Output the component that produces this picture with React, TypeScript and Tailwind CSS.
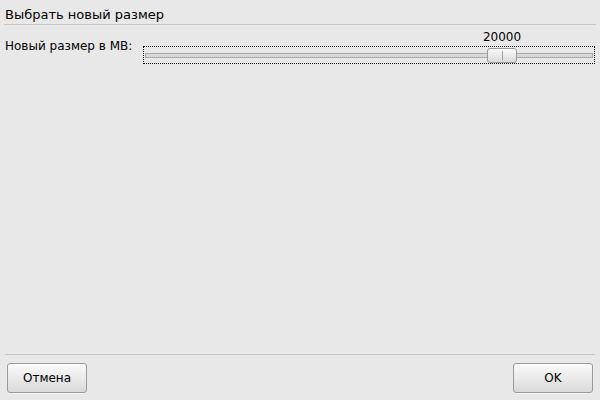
import { useState } from 'react'

const MIN = 0
const MAX = 24447
const TRACK = 450
const HANDLE = 30

const SizeSlider = ({ value }: { value: number }) => {
  const left = 1 + Math.round(((value - MIN) / (MAX - MIN)) * (TRACK - 2 - HANDLE))
  return (
    <div className="flex-1 flex flex-col">
      <div className="relative h-[14px] leading-[14px]">
        <span className="absolute top-0 -translate-x-1/2" style={{ left: left + HANDLE / 2 + 1 }}>
          {value}
        </span>
      </div>
      <div className="relative mt-[2px] h-[18px] border border-dotted border-black">
        <div className="mx-px mt-[6px] h-[5px] border border-[#a9a9a9] bg-[#d9d9d9]" />
        <div
          className="absolute top-[1px] h-[15px] w-[30px] rounded-[3px] border border-[#9c9c9c] bg-gradient-to-b from-[#fbfbfb] to-[#dadada] flex justify-center"
          style={{ left }}
        >
          <div className="mt-[2px] h-[9px] w-px bg-[#a5a5a5]" />
        </div>
      </div>
    </div>
  )
}

const Button = ({ label }: { label: string }) => (
  <button className="w-[80px] h-[30px] rounded-[3px] border border-[#9a9a9a] bg-gradient-to-b from-[#fbfbfb] to-[#d9d9d9] shadow-[0_1px_0_#f6f6f6] text-[12px] leading-[14px] text-black">
    {label}
  </button>
)

export default function App() {
  const [size] = useState(20000)

  return (
    <div className="w-[600px] h-[400px] bg-[#e8e8e8] flex flex-col font-['DejaVu_Sans',sans-serif] text-[12px] text-black">
      <div className="px-[4px] pt-[7px]">
        <div className="pl-[1px] text-[13px] leading-[15px]">Выбрать новый размер</div>
        <div className="mt-[2px] h-px bg-[#c6c6c6]" />
      </div>

      <div className="flex pl-[5px] pr-[5px] mt-[5px]">
        <div className="w-[138px] mt-[9px] leading-[14px]">Новый размер в MB:</div>
        <SizeSlider value={size} />
      </div>

      <div className="flex-1" />

      <div className="mx-[5px] h-px bg-[#c6c6c6]" />
      <div className="flex justify-between px-[7px] pt-[8px] pb-[7px]">
        <Button label="Отмена" />
        <Button label="OK" />
      </div>
    </div>
  )
}
